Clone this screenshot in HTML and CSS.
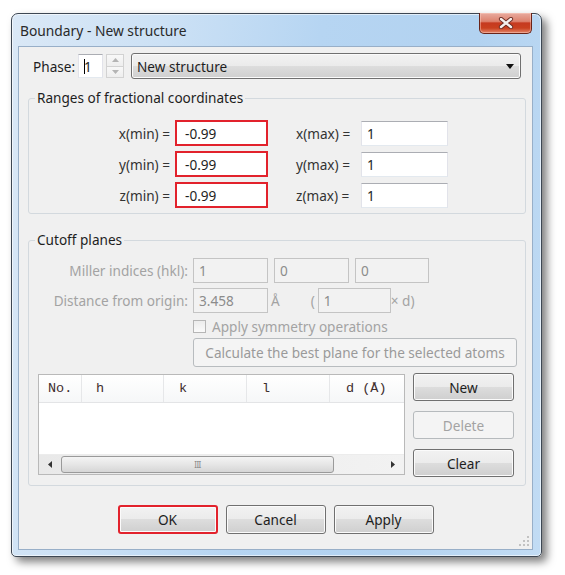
FILE: index.html
```html
<!DOCTYPE html>
<html>
<head>
<meta charset="utf-8">
<title>Boundary - New structure</title>
<link rel="stylesheet" href="styles.css">
</head>
<body>
<div class="stage">
  <div class="window">
    <div class="titlebar">
      <span class="title">Boundary - New structure</span>
      <div class="close">
        <svg width="18" height="12" viewBox="0 0 18 12">
          <path d="M4 2 L14 10 M14 2 L4 10" stroke="#6a2a22" stroke-width="4.2" stroke-linecap="round" fill="none"/>
          <path d="M4 2 L14 10 M14 2 L4 10" stroke="#f4f0ee" stroke-width="2.4" stroke-linecap="round" fill="none"/>
        </svg>
      </div>
    </div>
    <div class="client">
      <div class="phase-row">
        <span class="phase-label">Phase:</span>
        <div class="phase-input"><span class="caret"></span>1</div>
        <div class="spin">
          <div class="spin-btn"><svg width="7" height="4" viewBox="0 0 7 4"><path d="M0 4 L3.5 0 L7 4 Z" fill="#b4b4b4"/></svg></div>
          <div class="spin-btn"><svg width="7" height="4" viewBox="0 0 7 4"><path d="M0 0 L3.5 4 L7 0 Z" fill="#b4b4b4"/></svg></div>
        </div>
        <div class="combo">
          <span>New structure</span>
          <svg width="8" height="5" viewBox="0 0 8 5"><path d="M0 0 L8 0 L4 5 Z" fill="#111"/></svg>
        </div>
      </div>

      <fieldset class="group g1">
        <legend>Ranges of fractional coordinates</legend>
        <div class="coord-grid">
          <span class="cl-min">x(min) =</span><div class="field red">-0.99</div>
          <span class="cl-max">x(max) =</span><div class="field">1</div>
          <span class="cl-min">y(min) =</span><div class="field red">-0.99</div>
          <span class="cl-max">y(max) =</span><div class="field">1</div>
          <span class="cl-min">z(min) =</span><div class="field red">-0.99</div>
          <span class="cl-max">z(max) =</span><div class="field">1</div>
        </div>
      </fieldset>

      <fieldset class="group g2">
        <legend>Cutoff planes</legend>
        <div class="crow first">
          <span class="clabel">Miller indices (hkl):</span>
          <div class="dfield w75">1</div>
          <div class="dfield w75 gap6">0</div>
          <div class="dfield w74 gap6">0</div>
        </div>
        <div class="crow">
          <span class="clabel">Distance from origin:</span>
          <div class="dfield w75">3.458</div>
          <span class="dtext angst">Å</span>
          <span class="dtext paren">(</span>
          <div class="dfield w73">1</div>
          <span class="dtext times">× d)</span>
        </div>
        <div class="check-row">
          <span class="checkbox"></span>
          <span class="dtext">Apply symmetry operations</span>
        </div>
        <div class="calc-btn">Calculate the best plane for the selected atoms</div>
        <div class="table-area">
          <div class="table">
            <div class="thead">
              <div class="th c-no">No.</div>
              <div class="th c-h">h</div>
              <div class="th c-k">k</div>
              <div class="th c-l">l</div>
              <div class="th c-d">d (Å)</div>
            </div>
            <div class="tbody"></div>
            <div class="hscroll">
              <div class="sarrow"><svg width="4" height="7" viewBox="0 0 4 7"><path d="M4 0 L0 3.5 L4 7 Z" fill="#333"/></svg></div>
              <div class="sthumb"><span class="grip">III</span></div>
              <div class="strack"></div>
              <div class="sarrow"><svg width="4" height="7" viewBox="0 0 4 7"><path d="M0 0 L4 3.5 L0 7 Z" fill="#333"/></svg></div>
            </div>
          </div>
          <div class="side-buttons">
            <div class="btn">New</div>
            <div class="btn disabled">Delete</div>
            <div class="btn">Clear</div>
          </div>
        </div>
      </fieldset>

      <div class="dlg-buttons">
        <div class="btn dlg red-outline">OK</div>
        <div class="btn dlg">Cancel</div>
        <div class="btn dlg">Apply</div>
      </div>

      <svg class="resize-grip" width="11" height="11" viewBox="0 0 11 11">
        <g fill="#c2c2c2">
          <rect x="8" y="0" width="2" height="2"/>
          <rect x="4" y="4" width="2" height="2"/><rect x="8" y="4" width="2" height="2"/>
          <rect x="0" y="8" width="2" height="2"/><rect x="4" y="8" width="2" height="2"/><rect x="8" y="8" width="2" height="2"/>
        </g>
      </svg>
    </div>
  </div>
</div>
</body>
</html>
```

FILE: styles.css
```css
* { box-sizing: border-box; }

html, body {
  margin: 0;
  padding: 0;
  background: #ffffff;
}

body {
  font-family: "Noto Sans", "Open Sans", sans-serif;
  font-size: 13.6px;
  color: #1e1e1e;
}

.stage {
  width: 565px;
  height: 575px;
  padding: 13px 0 0 11px;
}

.window {
  width: 531px;
  height: 544px;
  border: 1px solid #3d4753;
  border-radius: 7px 7px 5px 5px;
  background: linear-gradient(100deg, #dae8f6 0%, #cce1f5 25%, #b6d5f2 50%, #b2d2f0 75%, #c2dcf4 100%);
  box-shadow: 5px 5px 9px rgba(0, 0, 0, 0.5), inset 0 0 0 1px rgba(255, 255, 255, 0.6);
  display: flex;
  flex-direction: column;
}

.titlebar {
  height: 32px;
  display: flex;
  align-items: flex-start;
}

.title {
  padding: 7px 0 0 8px;
  line-height: 19px;
  font-size: 13.8px;
  color: #2a2a2a;
}

.close {
  margin-left: auto;
  margin-right: 9px;
  margin-top: -1px;
  width: 53px;
  height: 21px;
  border: 1px solid #6a2418;
  border-top: none;
  border-radius: 0 0 5px 5px;
  background: linear-gradient(#e8ab9f 0%, #dd826e 42%, #c63a20 50%, #c9401f 75%, #e3866a 100%);
  box-shadow: inset 0 0 0 1px rgba(255, 210, 200, 0.45);
  display: flex;
  align-items: center;
  justify-content: center;
}

.client {
  position: relative;
  flex: 1;
  margin: 0 8px 6px 6px;
  background: #f0f0f0;
  border: 1px solid #98afc8;
  display: flex;
  flex-direction: column;
}

/* phase row */
.phase-row {
  margin-top: 6px;
  height: 26px;
  padding-left: 14px;
  display: flex;
  align-items: center;
}

.phase-label {
  width: 45px;
}

.phase-input {
  width: 25px;
  height: 24px;
  background: #fff;
  border: 1px solid;
  border-color: #abadb3 #e2e3ea #e3e9ef #e2e3ea;
  display: flex;
  align-items: center;
  padding-left: 5px;
}

.caret {
  display: inline-block;
  width: 1px;
  height: 15px;
  background: #000;
  margin-right: -1px;
}

.spin {
  margin-left: 3px;
  width: 18px;
  height: 24px;
  display: flex;
  flex-direction: column;
}

.spin-btn {
  flex: 1;
  border: 1px solid #d2d2d2;
  background: linear-gradient(#f8f8f8, #eeeeee);
  display: flex;
  align-items: center;
  justify-content: center;
}

.spin-btn + .spin-btn {
  border-top: none;
}

.combo {
  margin-left: 7px;
  width: 390px;
  height: 26px;
  border: 1px solid #707070;
  border-radius: 3px;
  background: linear-gradient(#f2f2f2 0%, #ebebeb 49%, #dddddd 50%, #cfcfcf 100%);
  box-shadow: inset 0 0 0 1px #fbfbfb;
  display: flex;
  align-items: center;
  justify-content: space-between;
  padding: 0 6px 0 5px;
}

/* group boxes */
.group {
  margin: 11px 6px 0 9px;
  padding: 0;
  border: 1px solid #d3d9de;
  border-radius: 3px;
  min-width: 0;
}

.group legend {
  margin-left: 6px;
  padding: 0 2px;
  line-height: 16px;
  font-size: 13.6px;
  color: #1e1e1e;
}

.coord-grid {
  margin-top: 14px;
  padding-bottom: 5px;
  display: grid;
  grid-template-columns: 146px 93px 93px 87px;
  grid-auto-rows: 26px;
  row-gap: 5px;
  align-items: center;
}

.cl-min {
  text-align: right;
  padding-right: 5px;
  color: #333;
}

.cl-max {
  padding-left: 28px;
  color: #333;
}

.field {
  height: 25px;
  background: #fff;
  border: 1px solid;
  border-color: #abadb3 #e2e3ea #e3e9ef #e2e3ea;
  display: flex;
  align-items: center;
  padding-left: 5px;
}

.field.red {
  height: 26px;
  border: 2px solid #e2222c;
  padding-left: 8px;
}

.g2 {
  margin-top: 18px;
  padding-bottom: 8px;
}

.crow {
  margin-top: 5px;
  height: 25px;
  display: flex;
  align-items: center;
}

.crow.first {
  margin-top: 10px;
}

.clabel {
  width: 164px;
  text-align: right;
  padding-right: 5px;
  color: #a3a3a3;
}

.dfield {
  height: 25px;
  border: 1px solid #c4c4c4;
  background: #f2f2f2;
  color: #8c8c8c;
  display: flex;
  align-items: center;
  padding-left: 5px;
}

.w75 { width: 75px; }
.w74 { width: 74px; }
.w73 { width: 73px; }
.gap6 { margin-left: 6px; }

.dtext {
  color: #a3a3a3;
}

.angst { margin-left: 3px; }
.paren { margin-left: 31px; margin-right: 3px; }
.times { margin-left: 0; }

.check-row {
  margin-top: 6px;
  height: 15px;
  padding-left: 164px;
  display: flex;
  align-items: center;
}

.checkbox {
  width: 13px;
  height: 13px;
  border: 1px solid #b6b6b6;
  background: linear-gradient(#ececec, #fafafa);
  margin-right: 6px;
}

.calc-btn {
  margin: 4px 0 0 164px;
  width: 324px;
  height: 29px;
  border: 1px solid #b8bcbf;
  border-radius: 3px;
  background: #f4f4f4;
  color: #9a9a9a;
  display: flex;
  align-items: center;
  justify-content: center;
}

.table-area {
  margin: 6px 0 0 9px;
  display: flex;
  gap: 8px;
}

.table {
  margin-top: 1px;
  width: 367px;
  height: 101px;
  border: 1px solid #b9b9b9;
  background: #fff;
  display: flex;
  flex-direction: column;
}

.thead {
  height: 28px;
  display: grid;
  grid-template-columns: 43px 82px 83px 83px 1fr;
  background: linear-gradient(#ffffff, #f6f7f8);
  border-bottom: 1px solid #e3e4e6;
  font-family: "Liberation Mono", "DejaVu Sans Mono", monospace;
  font-size: 13.5px;
  color: #3f2e2e;
}

.th {
  display: flex;
  align-items: center;
  border-right: 1px solid #e6e7e9;
}

.c-no { padding-left: 9px; }
.c-h { padding-left: 14px; }
.c-k { padding-left: 15px; }
.c-l { padding-left: 15px; }
.c-d { padding-left: 16px; border-right: none; }

.tbody {
  flex: 1;
}

.hscroll {
  height: 20px;
  display: grid;
  grid-template-columns: 22px 273px 1fr 22px;
  background: linear-gradient(90deg, #e9e9e9, #f2f2f2);
  border-top: 1px solid #ececec;
}

.sarrow {
  display: flex;
  align-items: center;
  justify-content: center;
}

.sthumb {
  margin: 1px 0;
  border: 1px solid #9a9a9a;
  border-radius: 3px;
  background: linear-gradient(#f4f4f4 0%, #e6e6e6 50%, #d6d6d6 100%);
  display: flex;
  align-items: center;
  justify-content: center;
}

.grip {
  font-size: 8px;
  letter-spacing: -0.5px;
  color: #8a8a8a;
  line-height: 1;
}

.side-buttons {
  width: 101px;
  display: flex;
  flex-direction: column;
  gap: 10px;
}

.btn {
  height: 28px;
  border: 1px solid #707070;
  border-radius: 3px;
  background: linear-gradient(#f2f2f2 0%, #ebebeb 49%, #dddddd 50%, #cfcfcf 100%);
  box-shadow: inset 0 0 0 1px #fbfbfb;
  display: flex;
  align-items: center;
  justify-content: center;
  color: #1e1e1e;
}

.btn.disabled {
  border-color: #b6babd;
  background: #f4f4f4;
  box-shadow: none;
  color: #a3a3a3;
}

.dlg-buttons {
  margin-top: 19px;
  display: flex;
  justify-content: center;
  gap: 8px;
}

.btn.dlg {
  width: 100px;
  height: 29px;
}

.btn.red-outline {
  border: 2px solid #e2222c;
}

.resize-grip {
  position: absolute;
  right: 2px;
  bottom: 2px;
}
```
